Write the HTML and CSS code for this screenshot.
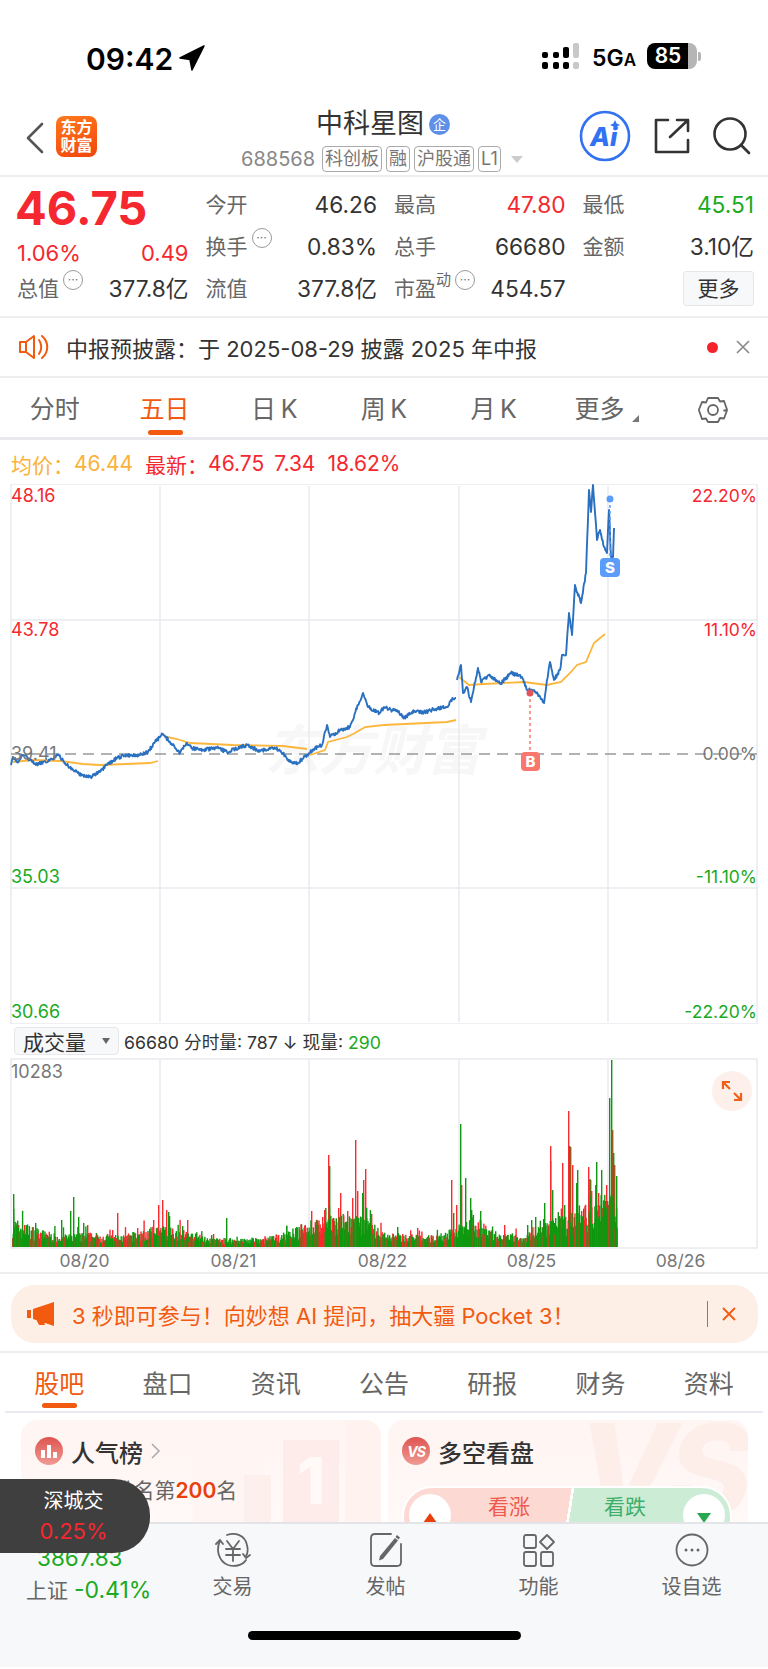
FILE: index.html
```html
<!DOCTYPE html>
<html lang="zh-CN">
<head>
    <meta charset="UTF-8">
    <meta name="viewport" content="width=device-width, initial-scale=1.0">
    <title>中科星图</title>
    <link rel="stylesheet" href="styles.css">
</head>
<body>
    <div class="page">
        <div class="status">
            <div class="clock">
                <span>09:42</span>
                <svg width="26" height="26" viewBox="0 0 26 26"><path d="M25 1 1 13l10 1.500L13 25z" fill="#000" stroke="#000" stroke-width="1.500" stroke-linejoin="round"/></svg>
            </div>
            <div class="status-right">
                <svg width="38" height="28" viewBox="0 0 38 28">
                    <rect x="0" y="9" width="6" height="6" rx="2"/><rect x="0" y="19" width="6" height="7" rx="2"/>
                    <rect x="11" y="9" width="6" height="6" rx="2"/><rect x="11" y="19" width="6" height="7" rx="2"/>
                    <rect x="21" y="4" width="6" height="11" rx="2"/><rect x="21" y="19" width="6" height="7" rx="2"/>
                    <rect x="31" y="0" width="6" height="15" rx="2" fill="#c8c8c8"/><rect x="31" y="19" width="6" height="7" rx="2" fill="#c8c8c8"/>
                </svg>
                <span class="net">5G<small>A</small></span>
                <div class="battery"><span>85</span></div>
                <div class="battery-nub"></div>
            </div>
        </div>

        <div class="nav">
            <div class="nav-left">
                <svg width="20" height="32" viewBox="0 0 20 32"><path d="M17 2 3 16l14 14" fill="none" stroke="#555" stroke-width="2.600" stroke-linecap="round" stroke-linejoin="round"/></svg>
                <div class="logo">东方<br>财富</div>
            </div>
            <div class="nav-title">
                <div class="name">中科星图<span class="qi">企</span></div>
                <div class="code">
                    <span>688568</span>
                    <span class="tag">科创板</span>
                    <span class="tag">融</span>
                    <span class="tag">沪股通</span>
                    <span class="tag">L1</span>
                    <i class="tri"></i>
                </div>
            </div>
            <div class="nav-right">
                <svg width="52" height="52" viewBox="0 0 52 52">
                    <circle cx="26" cy="26" r="24" fill="#fff" stroke="#3171f2" stroke-width="2.600"/>
                    <text x="11" y="36" class="ai">Ai</text>
                    <path d="M36 10l1.600 3.400L41 15l-3.400 1.600L36 20l-1.600-3.400L31 15l3.400-1.600z" fill="#3171f2"/>
                </svg>
                <svg width="36" height="36" viewBox="0 0 36 36"><path d="M14 2H2V34H34V22M16 19 34 2M23 2H34V13" fill="none" stroke="#333" stroke-width="2.600" stroke-linecap="round" stroke-linejoin="round"/></svg>
                <svg width="38" height="38" viewBox="0 0 38 38"><circle cx="17" cy="17" r="15.500" fill="none" stroke="#333" stroke-width="2.600"/><path d="M28 28l8 8" stroke="#333" stroke-width="2.600" stroke-linecap="round"/></svg>
            </div>
        </div>

        <div class="quote">
            <div class="price-box">
                <div class="price">46.75</div>
                <div class="cell up change"><span>1.06%</span><span>0.49</span></div>
            </div>
            <div class="cell"><label>今开</label><span>46.26</span></div>
            <div class="cell"><label>最高</label><span class="up">47.80</span></div>
            <div class="cell"><label>最低</label><span class="down">45.51</span></div>
            <div class="cell"><label>换手<i class="more-dot">···</i></label><span>0.83%</span></div>
            <div class="cell"><label>总手</label><span>66680</span></div>
            <div class="cell"><label>金额</label><span>3.10亿</span></div>
            <div class="cell"><label>总值<i class="more-dot">···</i></label><span>377.8亿</span></div>
            <div class="cell"><label>流值</label><span>377.8亿</span></div>
            <div class="cell"><label>市盈<sup>动</sup><i class="more-dot">···</i></label><span>454.57</span></div>
            <div class="cell cell-end"><button class="more-btn">更多</button></div>
        </div>

        <div class="notice">
            <svg width="32" height="26" viewBox="0 0 32 26"><path d="M2 8H8L16 2V24L8 18H2zM8 8V18M21 6c3 4 3 10 0 14M24 2c7 6 7 16 0 22" fill="none" stroke="#f15a0f" stroke-width="2" stroke-linejoin="round" stroke-linecap="round"/></svg>
            <span class="notice-text">中报预披露：于 2025-08-29 披露 2025 年中报</span>
            <i class="red-dot"></i>
            <svg width="14" height="14" viewBox="0 0 14 14"><path d="M1 1l12 12M13 1 1 13" stroke="#888" stroke-width="1.600"/></svg>
        </div>

        <div class="tabs">
            <div class="tab">分时</div>
            <div class="tab active">五日</div>
            <div class="tab">日&#8201;K</div>
            <div class="tab">周&#8201;K</div>
            <div class="tab">月&#8201;K</div>
            <div class="tab tab-more">更多<i class="corner"></i></div>
            <div class="tab">
                <svg width="30" height="30" viewBox="0 0 30 30"><path d="M10 3h10l2 3.500 4-.5 3 8.500-3 1 3 0-3 8-4-.5L20 27H10l-2-3.500-4 .5-3-8.500 0-1-0-0 3-7.500 4 .5z" fill="none" stroke="#666" stroke-width="1.800" stroke-linejoin="round"/><circle cx="15" cy="15" r="5" fill="none" stroke="#666" stroke-width="1.800"/></svg>
            </div>
        </div>

        <div class="legend">
            <span class="avg">均价：</span><span class="avg gap-r">46.44</span>
            <span class="up">最新：</span><span class="up gap-s">46.75</span>
            <span class="up gap-r">7.34</span>
            <span class="up">18.62%</span>
        </div>

        <div class="chart">
            <div class="watermark">东方财富</div>
            <svg class="chart-svg" width="768" height="540" viewBox="0 484 768 540">
                <path class="grid" d="M11 484H757V1024H11ZM11 620H757M11 888H757"/>
                <path class="grid" d="M160 486V1022M309 486V1022M459 486V1022M608 486V1022"/>
                <path class="zero" d="M11 754H757"/>
                <path id="avgLine" class="avg-line"/>
                <path id="priceLine" class="price-line"/>
                <path class="mark-b" d="M530 693V752"/>
                <circle cx="530" cy="693" r="3.500" fill="#e0555c"/>
                <rect x="521" y="752" width="19" height="19" rx="4" fill="#f9776c"/>
                <text x="530.500" y="767" class="badge">B</text>
                <path class="mark-s" d="M610 499V558"/>
                <circle cx="610" cy="499" r="3.500" fill="#5c9dfb"/>
                <rect x="600" y="558" width="20" height="19" rx="4" fill="#5c9dfb"/>
                <text x="610" y="573" class="badge">S</text>
            </svg>
            <span class="lb lb-l row1 up">48.16</span>
            <span class="lb lb-r row1 up">22.20%</span>
            <span class="lb lb-l row2 up">43.78</span>
            <span class="lb lb-r row2 up">11.10%</span>
            <span class="lb lb-l row3 flat">39.41</span>
            <span class="lb lb-r row3 flat">0.00%</span>
            <span class="lb lb-l row4 down">35.03</span>
            <span class="lb lb-r row4 down">-11.10%</span>
            <span class="lb lb-l row5 down">30.66</span>
            <span class="lb lb-r row5 down">-22.20%</span>
        </div>

        <div class="vol-head">
            <div class="vol-select">成交量<i></i></div>
            <span>66680 分时量: 787 ↓ 现量: <b class="down">290</b></span>
        </div>

        <div class="volume">
            <svg class="chart-svg" width="768" height="192" viewBox="0 1058 768 192">
                <path class="grid" d="M11 1059H757V1248H11Z"/>
                <path class="grid" d="M160 1060V1247M309 1060V1247M459 1060V1247M608 1060V1247"/>
                <g id="volBars"></g>
            </svg>
            <span class="lb lb-l vol-max">10283</span>
            <div class="expand">
                <svg width="24" height="24" viewBox="0 0 24 24"><path d="M3 10V3H10M3 3 10 10M21 14V21H14M21 21 14 14" fill="none" stroke="#f1601a" stroke-width="2.200"/></svg>
            </div>
        </div>

        <div class="axis">
            <span>08/20</span><span>08/21</span><span>08/22</span><span>08/25</span><span>08/26</span>
        </div>

        <div class="banner-wrap">
            <div class="banner">
                <svg width="28" height="24" viewBox="0 0 28 24"><path d="M0 8H4V16H0zM6 7 27 0V24L6 17z M9 17h7l2 6H12z" fill="#f15a0f"/></svg>
                <span class="banner-text">3 秒即可参与！向妙想 AI 提问，抽大疆 Pocket 3！</span>
                <i class="banner-sep"></i>
                <svg width="14" height="14" viewBox="0 0 14 14"><path d="M1 1l12 12M13 1 1 13" stroke="#f15a0f" stroke-width="1.800"/></svg>
            </div>
        </div>

        <div class="tabs tabs-info">
            <div class="tab active">股吧</div>
            <div class="tab">盘口</div>
            <div class="tab">资讯</div>
            <div class="tab">公告</div>
            <div class="tab">研报</div>
            <div class="tab">财务</div>
            <div class="tab">资料</div>
        </div>

        <div class="cards">
            <div class="card">
                <div class="deco deco-a"></div>
                <div class="deco deco-d"></div>
                <div class="deco deco-b"></div>
                <div class="deco deco-c"></div>
                <div class="deco-num">1</div>
                <div class="card-head">
                    <div class="round-icon">
                        <svg width="18" height="16" viewBox="0 0 18 16"><path d="M1 7h4v8H1zM7 2h4v13H7zM13 9h4v6h-4z" fill="#fff"/></svg>
                    </div>
                    <span>人气榜</span>
                    <svg width="10" height="16" viewBox="0 0 10 16"><path d="M1 1l7 7-7 7" fill="none" stroke="#aaa" stroke-width="1.500"/></svg>
                </div>
                <div class="rank">A股市场排名第<b>200</b>名</div>
            </div>
            <div class="card">
                <div class="deco-vs">VS</div>
                <div class="card-head">
                    <div class="round-icon vs">VS</div>
                    <span>多空看盘</span>
                </div>
                <div class="vote">
                    <div class="vote-btn"><i class="tri-up"></i></div>
                    <span class="vote-up">看涨</span>
                    <span class="vote-down">看跌</span>
                    <div class="vote-btn"><i class="tri-down"></i></div>
                </div>
            </div>
        </div>

        <div class="bottom">
            <div class="bottom-row">
                <div class="index">
                    <span class="index-val down">3867.83</span>
                    <span class="index-name">上证 <b class="down">-0.41%</b></span>
                </div>
                <div class="bottom-item">
                    <svg width="40" height="36" viewBox="0 0 40 36"><g fill="none" stroke="#666" stroke-width="1.800" stroke-linecap="round" stroke-linejoin="round"><path d="M7 9C3 17 5 29 15 33c6 2 14 1 18-5M14 3c8-3 18 0 20 10 1 4 1 8-1 11"/><path d="M3 12l4-4 3 4M30 22l3 4 4-3"/><path d="M14 9l6 8 6-8M13 17H27M13 23H27M20 17V29"/></g></svg>
                    <span>交易</span>
                </div>
                <div class="bottom-item">
                    <svg width="34" height="36" viewBox="0 0 34 36"><g fill="none" stroke="#666" stroke-width="1.800" stroke-linecap="round"><path d="M22 2H6Q2 2 2 6V30Q2 34 6 34H28Q32 34 32 30V12"/></g><path d="M11 24 26 6l3 2.500L14 27l-4 1.500zM28 3l3 2.500-1.500 2-3-2.500z" fill="#666"/></svg>
                    <span>发帖</span>
                </div>
                <div class="bottom-item">
                    <svg width="34" height="36" viewBox="0 0 34 36"><g fill="none" stroke="#666" stroke-width="1.800" stroke-linejoin="round"><rect x="2" y="3" width="12" height="13" rx="2"/><rect x="2" y="20" width="12" height="14" rx="2"/><rect x="19" y="20" width="12" height="14" rx="2"/><path d="M25 3l7 7-7 7-7-7z"/></g></svg>
                    <span>功能</span>
                </div>
                <div class="bottom-item">
                    <svg width="36" height="36" viewBox="0 0 36 36"><circle cx="18" cy="18" r="15.500" fill="none" stroke="#666" stroke-width="1.800"/><circle cx="12" cy="18" r="1.500" fill="#666"/><circle cx="18" cy="18" r="1.500" fill="#666"/><circle cx="24" cy="18" r="1.500" fill="#666"/></svg>
                    <span>设自选</span>
                </div>
            </div>
            <div class="home-bar"></div>
        </div>

        <div class="float-index">
            <span>深城交</span>
            <b>0.25%</b>
        </div>
    </div>

    <script src="chart.js"></script>
</body>
</html>
```

FILE: styles.css
```css
* {
    box-sizing: border-box;
}

body {
    margin: 0;
    padding: 0;
    background-color: #fff;
    font-family: Inter, "Noto Sans CJK SC", sans-serif;
    color: #333;
}

i {
    font-style: normal;
}

.page {
    position: relative;
    width: 768px;
    height: 1669px;
    overflow: hidden;
}

.up {
    color: #f5272f;
}

.down {
    color: #1aaa1f;
}

.flat {
    color: #777;
}

/* status bar */
.status {
    height: 100px;
    display: flex;
    justify-content: space-between;
    padding: 38px 67px 0 86px;
}

.clock {
    display: flex;
    align-items: flex-start;
    gap: 6px;
    font-size: 30px;
    font-weight: 600;
    line-height: 42px;
    color: #000;
}

.clock svg {
    margin-top: 7px;
}

.status-right {
    display: flex;
    align-items: flex-start;
    padding-top: 5px;
}

.net {
    margin-left: 12px;
    font-size: 23px;
    font-weight: 600;
    line-height: 30px;
    color: #000;
}

.net small {
    font-size: 17px;
}

.battery {
    width: 50px;
    height: 26px;
    margin-left: 11px;
    border-radius: 8px;
    background: linear-gradient(to right, #000 82%, #b5b5b5 82%);
    color: #fff;
    font-size: 21px;
    font-weight: 600;
    line-height: 26px;
    text-align: center;
}

.battery span {
    margin-right: 8px;
}

.battery-nub {
    width: 3px;
    height: 9px;
    margin: 9px 0 0 1px;
    border-radius: 0 2px 2px 0;
    background-color: #b5b5b5;
}

/* nav */
.nav {
    position: relative;
    height: 77px;
    display: flex;
    justify-content: space-between;
    border-bottom: 2px solid #eee;
}

.nav-left {
    display: flex;
    align-items: flex-start;
    gap: 11px;
    padding: 16px 0 0 25px;
}

.nav-left svg {
    margin-top: 6px;
}

.logo {
    width: 41px;
    height: 41px;
    border-radius: 8px;
    background: linear-gradient(160deg, #ff7a1c, #f2440d);
    color: #fff;
    font-size: 16px;
    font-weight: 700;
    line-height: 18px;
    text-align: center;
    padding-top: 2px;
}

.nav-title {
    position: absolute;
    left: 241px;
    top: 6px;
}

.name {
    display: flex;
    align-items: center;
    margin-left: 75px;
    font-size: 27px;
    line-height: 36px;
    color: #333;
}

.qi {
    width: 21px;
    height: 21px;
    margin-left: 5px;
    border-radius: 50%;
    background-color: #5f90e8;
    color: #fff;
    font-size: 13px;
    line-height: 21px;
    text-align: center;
}

.code {
    display: flex;
    align-items: center;
    gap: 4px;
    margin-top: 4px;
    font-size: 20px;
    line-height: 26px;
    color: #888;
}

.code > span:first-child {
    margin-right: 3px;
}

.tag {
    height: 26px;
    padding: 0 2px;
    border: 1px solid #aaa;
    border-radius: 4px;
    font-size: 18px;
    line-height: 24px;
    color: #777;
}

.tri {
    width: 0;
    height: 0;
    margin-left: 6px;
    border-left: 6px solid transparent;
    border-right: 6px solid transparent;
    border-top: 7px solid #ccc;
}

.nav-right {
    display: flex;
    align-items: center;
    gap: 23px;
    padding: 0 17px 0 0;
    height: 72px;
}

.ai {
    font-size: 26px;
    font-weight: 800;
    font-style: italic;
    fill: #3171f2;
    font-family: Inter, sans-serif;
}

/* quote */
.quote {
    height: 141px;
    display: grid;
    grid-template-columns: repeat(4, 171.500px);
    grid-template-rows: repeat(3, 42px);
    column-gap: 17px;
    padding: 7px 0 0 17px;
    border-bottom: 2px solid #eee;
    font-size: 22.700px;
    line-height: 42px;
}

.price-box {
    grid-row: span 2;
}

.price {
    margin-left: -2px;
    font-size: 47px;
    font-weight: 700;
    line-height: 48px;
    color: #f5272f;
}

.cell {
    display: flex;
    justify-content: space-between;
    color: #333;
}

.cell label {
    display: flex;
    color: #666;
    font-size: 21px;
}

.cell.change {
    color: #f5272f;
    font-size: 22px;
    line-height: 28px;
    margin-top: 7px;
}

.cell-end {
    justify-content: flex-end;
}

.more-dot {
    width: 20px;
    height: 20px;
    margin: 2px 0 0 4px;
    border: 1px solid #999;
    border-radius: 50%;
    color: #777;
    font-size: 12px;
    line-height: 17px;
    text-align: center;
}

.cell label sup {
    font-size: 15px;
    line-height: 24px;
    vertical-align: top;
}

.more-btn {
    width: 71px;
    height: 35px;
    margin-top: 3px;
    padding: 0;
    border: 1px solid #e6e7ea;
    border-radius: 3px;
    background-color: #f7f8fa;
    color: #333;
    font-family: inherit;
    font-size: 21px;
    line-height: 30px;
}

/* notice */
.notice {
    height: 60px;
    display: flex;
    align-items: center;
    padding: 0 18px 0 18px;
    border-bottom: 2px solid #eee;
}

.notice-text {
    flex: 1;
    margin-left: 16px;
    font-size: 22px;
    color: #333;
}

.red-dot {
    width: 11px;
    height: 11px;
    margin-right: 18px;
    border-radius: 50%;
    background-color: #f5222d;
}

/* tabs */
.tabs {
    height: 62px;
    display: grid;
    grid-template-columns: repeat(7, 1fr);
    border-bottom: 3px solid #e9eaef;
}

.tab {
    position: relative;
    padding-top: 13px;
    font-size: 25px;
    line-height: 36px;
    color: #666;
    text-align: center;
}

.tab svg {
    margin-top: 4px;
}

.tab.active {
    color: #f15a0f;
}

.tab.active::after {
    content: "";
    position: absolute;
    left: 50%;
    bottom: 2px;
    width: 35px;
    height: 5px;
    margin-left: -17px;
    border-radius: 3px;
    background-color: #f15a0f;
}

.tab-more {
    padding-right: 8px;
}

.corner {
    position: absolute;
    margin: 24px 0 0 8px;
    border-left: 7px solid transparent;
    border-bottom: 7px solid #777;
}

/* legend */
.legend {
    height: 44px;
    display: flex;
    align-items: center;
    padding: 3px 0 0 11px;
    font-size: 21px;
}

.avg {
    color: #fbb23a;
}

.gap-r {
    margin-right: 12px;
}

.gap-s {
    margin-right: 10px;
}

/* price chart */
.chart {
    position: relative;
    height: 540px;
}

.chart-svg {
    display: block;
    position: relative;
}

.watermark {
    position: absolute;
    left: 265px;
    top: 232px;
    font-size: 54px;
    font-weight: 700;
    font-style: italic;
    line-height: 70px;
    color: #f7f7f8;
}

.grid {
    fill: none;
    stroke: #e9eaf0;
    stroke-width: 1.500;
}

.zero {
    fill: none;
    stroke: #999;
    stroke-width: 1.500;
    stroke-dasharray: 11 7;
}

.price-line {
    fill: none;
    stroke: #2a70c0;
    stroke-width: 1.900;
    stroke-linejoin: round;
}

.avg-line {
    fill: none;
    stroke: #fcb63c;
    stroke-width: 1.800;
}

.mark-b {
    fill: none;
    stroke: #f9776c;
    stroke-width: 1.500;
    stroke-dasharray: 3 3;
}

.mark-s {
    fill: none;
    stroke: #5c9dfb;
    stroke-width: 1.500;
    stroke-dasharray: 3 3;
}

.badge {
    fill: #fff;
    font-family: Inter, sans-serif;
    font-size: 15px;
    font-weight: 800;
    text-anchor: middle;
}

.lb {
    position: absolute;
    font-size: 18px;
    line-height: 20px;
}

.lb-l {
    left: 11px;
}

.lb-r {
    right: 11px;
    font-size: 17.500px;
}

.row1 {
    top: 2px;
}

.row2 {
    top: 136px;
}

.row3 {
    top: 260px;
}

.row4 {
    top: 383px;
}

.row5 {
    top: 518px;
}

/* volume */
.vol-head {
    height: 34px;
    display: flex;
    align-items: center;
    gap: 5px;
    padding-left: 14px;
    font-size: 17.700px;
    color: #333;
}

.vol-head b {
    font-weight: 400;
}

.vol-select {
    display: flex;
    align-items: center;
    justify-content: space-between;
    width: 105px;
    height: 28px;
    padding: 0 8px;
    border: 1px solid #e6e7ea;
    border-radius: 4px;
    background-color: #f7f8fa;
    font-size: 21px;
}

.vol-select i {
    border-left: 4px solid transparent;
    border-right: 4px solid transparent;
    border-top: 6px solid #666;
}

.volume {
    position: relative;
    height: 190px;
}

.vol-max {
    top: 4px;
    color: #777;
}

.expand {
    position: absolute;
    left: 712px;
    top: 13px;
    width: 40px;
    height: 40px;
    display: flex;
    align-items: center;
    justify-content: center;
    border-radius: 50%;
    background-color: #fdf0ea;
}

.axis {
    height: 26px;
    display: grid;
    grid-template-columns: repeat(5, 149px);
    padding-left: 10px;
    border-bottom: 2px solid #eee;
    font-size: 17.500px;
    line-height: 26px;
    color: #777;
    text-align: center;
}

/* banner */
.banner-wrap {
    height: 79px;
    padding: 11px 10px 0 11px;
    border-bottom: 2px solid #eee;
}

.banner {
    height: 58px;
    display: flex;
    align-items: center;
    padding: 0 22px 0 16px;
    border-radius: 24px;
    background-color: #fdeee6;
}

.banner-text {
    flex: 1;
    margin-left: 17px;
    font-size: 22px;
    color: #f15a0f;
}

.banner-sep {
    width: 1px;
    height: 26px;
    margin-right: 14px;
    background-color: #f15a0f;
}

.tabs-info {
    height: 60px;
    margin: 0 5px;
    border-bottom: 2px solid #e9eaef;
}

.tabs-info .tab.active::after {
    bottom: 3px;
}

/* cards */
.cards {
    height: 109px;
    display: flex;
    gap: 7px;
    padding: 7px 0 0 21px;
    overflow: hidden;
}

.card {
    position: relative;
    width: 360px;
    height: 140px;
    padding: 17px 14px;
    border-radius: 16px;
    background: linear-gradient(to bottom, #fff5f2, #fffafa);
    overflow: hidden;
}

.deco {
    position: absolute;
    background-color: #fff0ec;
}

.deco-a {
    left: 172px;
    top: 0;
    width: 70px;
    height: 150px;
    background-color: #fff6f3;
}

.deco-d {
    left: 223px;
    top: 55px;
    width: 27px;
    height: 90px;
    background-color: #fdefec;
}

.deco-b {
    left: 262px;
    top: 20px;
    width: 56px;
    height: 120px;
    background-color: #fdecea;
}

.deco-c {
    left: 324px;
    top: 0;
    width: 36px;
    height: 150px;
    background-color: #fff2ef;
}

.deco-num {
    position: absolute;
    left: 262px;
    top: 26px;
    width: 56px;
    color: #fff9f7;
    font-size: 64px;
    font-weight: 800;
    line-height: 70px;
    text-align: center;
}

.deco-vs {
    position: absolute;
    right: 4px;
    top: 0;
    color: #fdeeea;
    font-size: 128px;
    font-weight: 800;
    font-style: italic;
    line-height: 100px;
    letter-spacing: -8px;
}

.card-head {
    position: relative;
    display: flex;
    align-items: center;
    gap: 8px;
    height: 28px;
    font-size: 24px;
    font-weight: 500;
    color: #333;
}

.round-icon {
    width: 28px;
    height: 28px;
    display: flex;
    align-items: center;
    justify-content: center;
    border-radius: 50%;
    background: linear-gradient(to bottom, #de5550, #f09a94);
}

.round-icon.vs {
    color: #fff;
    font-size: 14px;
    font-weight: 700;
    font-style: italic;
    letter-spacing: -1px;
}

.rank {
    position: relative;
    margin-top: 11px;
    font-size: 21px;
    line-height: 30px;
    color: #666;
}

.rank b {
    color: #e8400c;
    font-weight: 600;
}

.vote {
    position: relative;
    display: grid;
    grid-template-columns: 42px 1fr 1fr 42px;
    width: 330px;
    height: 62px;
    margin: 21px 0 0 0;
    padding: 6px 5px;
    border: 2px solid #fff;
    border-radius: 30px;
    background: linear-gradient(99deg, #fdd9d4 50%, #fff 50%, #fff 50.800%, #cdecd6 50.800%);
    font-size: 21px;
    line-height: 26px;
    text-align: center;
}

.vote-btn {
    width: 42px;
    height: 42px;
    display: flex;
    align-items: center;
    justify-content: center;
    padding-top: 6px;
    border-radius: 50%;
    background-color: #fff;
}

.vote-up {
    color: #ee5a4c;
}

.vote-down {
    color: #3fae6a;
}

.tri-up {
    border-left: 7px solid transparent;
    border-right: 7px solid transparent;
    border-bottom: 10px solid #e8400c;
}

.tri-down {
    border-left: 7px solid transparent;
    border-right: 7px solid transparent;
    border-top: 10px solid #2aa84f;
}

/* bottom bar */
.bottom {
    position: relative;
    height: 145px;
    padding-top: 8px;
    border-top: 2px solid #e3e4e8;
    background-color: #f7f8fa;
}

.bottom-row {
    display: grid;
    grid-template-columns: 156px repeat(4, 153px);
}

.index {
    display: flex;
    flex-direction: column;
    padding: 10px 0 0 26px;
}

.index-val {
    margin-left: 11px;
    font-size: 22.500px;
    line-height: 32px;
}

.index-name {
    margin-top: 1px;
    font-size: 21px;
    line-height: 30px;
    color: #666;
    white-space: nowrap;
}

.index-name b {
    font-size: 23px;
    font-weight: 400;
}

.bottom-item {
    display: flex;
    flex-direction: column;
    align-items: center;
    gap: 5px;
    font-size: 20px;
    line-height: 28px;
    color: #666;
}

.home-bar {
    width: 273px;
    height: 9px;
    margin: 25px auto 0;
    border-radius: 5px;
    background-color: #000;
}

.float-index {
    position: absolute;
    left: 0;
    top: 1479px;
    width: 150px;
    height: 74px;
    display: flex;
    flex-direction: column;
    align-items: center;
    justify-content: center;
    padding-right: 3px;
    border-radius: 0 36px 36px 0;
    background-color: #3f3f3f;
    color: #fff;
    font-size: 20px;
    line-height: 30px;
}

.float-index b {
    color: #f5272f;
    font-size: 22px;
    font-weight: 400;
}
```

FILE: chart.js
```js
// key points are in page pixels, read off the day columns
var priceParts = [
    [[11,765],[13,757],[17,762],[23,755],[30,760],[37,765],[43,762],[50,760],[58,755],[65,763],[73,770],[82,775],[90,777],[100,772],[107,765],[117,758],[127,755],[140,755],[148,752],[155,742],[163,734],[170,742],[180,753],[187,743],[192,748],[203,750],[217,748],[227,752],[240,747],[248,745],[257,750],[267,750],[275,748],[283,753],[290,762],[298,763],[307,755],[315,748],[322,745],[327,725],[330,737],[340,730],[350,727],[355,713],[363,693],[368,707],[380,713],[384,707],[391,710],[397,710],[404,718],[412,712],[425,712],[435,709],[447,707],[451,700],[456,698]],
    [[457,680],[461,665],[463,693],[467,687],[471,702],[474,687],[478,668],[481,682],[489,675],[501,683],[511,673],[522,677],[527,690],[534,690],[544,703],[547,680],[550,662],[554,680],[560,670],[562,655],[566,655],[569,613],[572,635],[575,585],[581,603],[586,573],[589,490],[591,512],[593,485],[597,540],[600,530],[604,547],[607,553],[609,510],[611,557],[613,557],[614,528]]
];
var avgParts = [
    [[13,762],[33,760],[60,761],[83,764],[100,765],[127,764],[150,763],[158,761]],
    [[167,737],[177,739],[190,743],[233,745],[283,746],[307,749]],
    [[310,755],[325,750],[328,742],[347,737],[355,733],[365,727],[384,725],[447,722],[456,720]],
    [[459,677],[469,685],[484,684],[524,682],[547,685],[561,682],[571,672],[577,665],[586,662],[594,643],[605,634]]
];

// bars: page x, height in px, red or green
var spikes = [
    [13,53,'g'],[13,38,'g'],[18,22,'r'],[24,22,'r'],[35,24,'g'],[61,27,'g'],[70,36,'g'],[73,50,'g'],[78,30,'g'],[83,24,'g'],[87,22,'r'],[112,17,'r'],[117,34,'r'],[137,19,'r'],[153,27,'r'],[158,42,'r'],[162,47,'r'],[166,37,'r'],[168,35,'g'],[182,21,'g'],[187,27,'r'],[226,29,'g'],[286,21,'g'],[295,19,'g'],[311,36,'r'],[315,22,'g'],[324,37,'r'],[328,92,'r'],[329,81,'g'],[333,29,'g'],[340,54,'r'],[338,39,'r'],[347,36,'r'],[352,49,'r'],[355,107,'r'],[357,56,'r'],[362,54,'g'],[363,67,'r'],[365,78,'r'],[366,29,'g'],
    [397,20,'g'],[417,19,'r'],[451,67,'r'],[453,34,'g'],[456,42,'r'],[460,123,'g'],[461,62,'r'],[465,69,'g'],[470,49,'g'],[471,37,'g'],[480,36,'g'],[504,22,'r'],[527,22,'g'],[531,27,'g'],[535,30,'g'],[544,44,'g'],[543,28,'g'],[550,101,'r'],[550,86,'r'],[552,57,'g'],[555,29,'g'],[559,31,'g'],[562,84,'r'],[564,42,'g'],[568,136,'r'],[569,101,'g'],[570,100,'r'],[572,82,'r'],[576,64,'g'],[577,77,'g'],[581,36,'r'],[588,80,'r'],[590,67,'r'],[591,56,'r'],[595,62,'r'],[596,85,'g'],[601,77,'g'],[598,54,'r'],[606,62,'r'],[607,46,'g'],[609,149,'g'],[611,187,'g'],[612,117,'r'],[613,94,'g'],[614,82,'r'],[616,71,'g']
];
var baseLevel = [[12,30],[40,18],[60,13],[90,15],[120,12],[150,20],[170,22],[185,17],[210,9],[260,9],[285,15],[310,28],[340,34],[365,30],[384,15],[430,12],[450,18],[470,34],[500,13],[525,13],[540,28],[560,30],[590,46],[617,60]];

var seed = 7;
function rnd() {
    seed = (seed * 16807) % 2147483647;
    return seed / 2147483647;
}

function jitterPath(parts, amount) {
    var d = '';
    parts.forEach(function(pts) {
        for (var i = 0; i < pts.length - 1; i++) {
            var a = pts[i], b = pts[i + 1];
            var steps = Math.max(1, Math.round((b[0] - a[0]) / 0.62));
            for (var s = 0; s < steps; s++) {
                var t = s / steps;
                var x = a[0] + (b[0] - a[0]) * t;
                var y = a[1] + (b[1] - a[1]) * t + (s === 0 ? 0 : (rnd() - 0.5) * amount);
                d += (i === 0 && s === 0 ? 'M' : 'L') + x.toFixed(1) + ' ' + y.toFixed(1);
            }
        }
        var end = pts[pts.length - 1];
        d += 'L' + end[0] + ' ' + end[1];
    });
    return d;
}

function smoothPath(parts) {
    return parts.map(function(pts) {
        return 'M' + pts.map(function(p) { return p.join(' '); }).join('L');
    }).join('');
}

function baseAt(x) {
    for (var i = 0; i < baseLevel.length - 1; i++) {
        if (x <= baseLevel[i + 1][0]) {
            var t = (x - baseLevel[i][0]) / (baseLevel[i + 1][0] - baseLevel[i][0]);
            return baseLevel[i][1] + (baseLevel[i + 1][1] - baseLevel[i][1]) * t;
        }
    }
    return 10;
}

function bar(x, h, c) {
    var color = c === 'r' ? '#fb2a2e' : '#0f980f';
    return '<rect x="' + x.toFixed(1) + '" y="' + (1247 - h).toFixed(1) + '" width="1.400" height="' + h.toFixed(1) + '" fill="' + color + '"/>';
}

var html = '';
spikes.forEach(function(s) {
    if (s[2] === 'r') html += bar(s[0], s[1], 'r');
});
for (var x = 12; x < 617; x += 0.62) {
    var h = baseAt(x) * (0.3 + rnd() * 0.7);
    if (rnd() < 0.08) h = h * 1.5;
    html += bar(x, h, rnd() < 0.3 ? 'r' : 'g');
}
spikes.forEach(function(s) {
    if (s[2] === 'g') html += bar(s[0], s[1], 'g');
});

document.getElementById('volBars').innerHTML = html;
document.getElementById('priceLine').setAttribute('d', jitterPath(priceParts, 3.6));
document.getElementById('avgLine').setAttribute('d', smoothPath(avgParts));
```
